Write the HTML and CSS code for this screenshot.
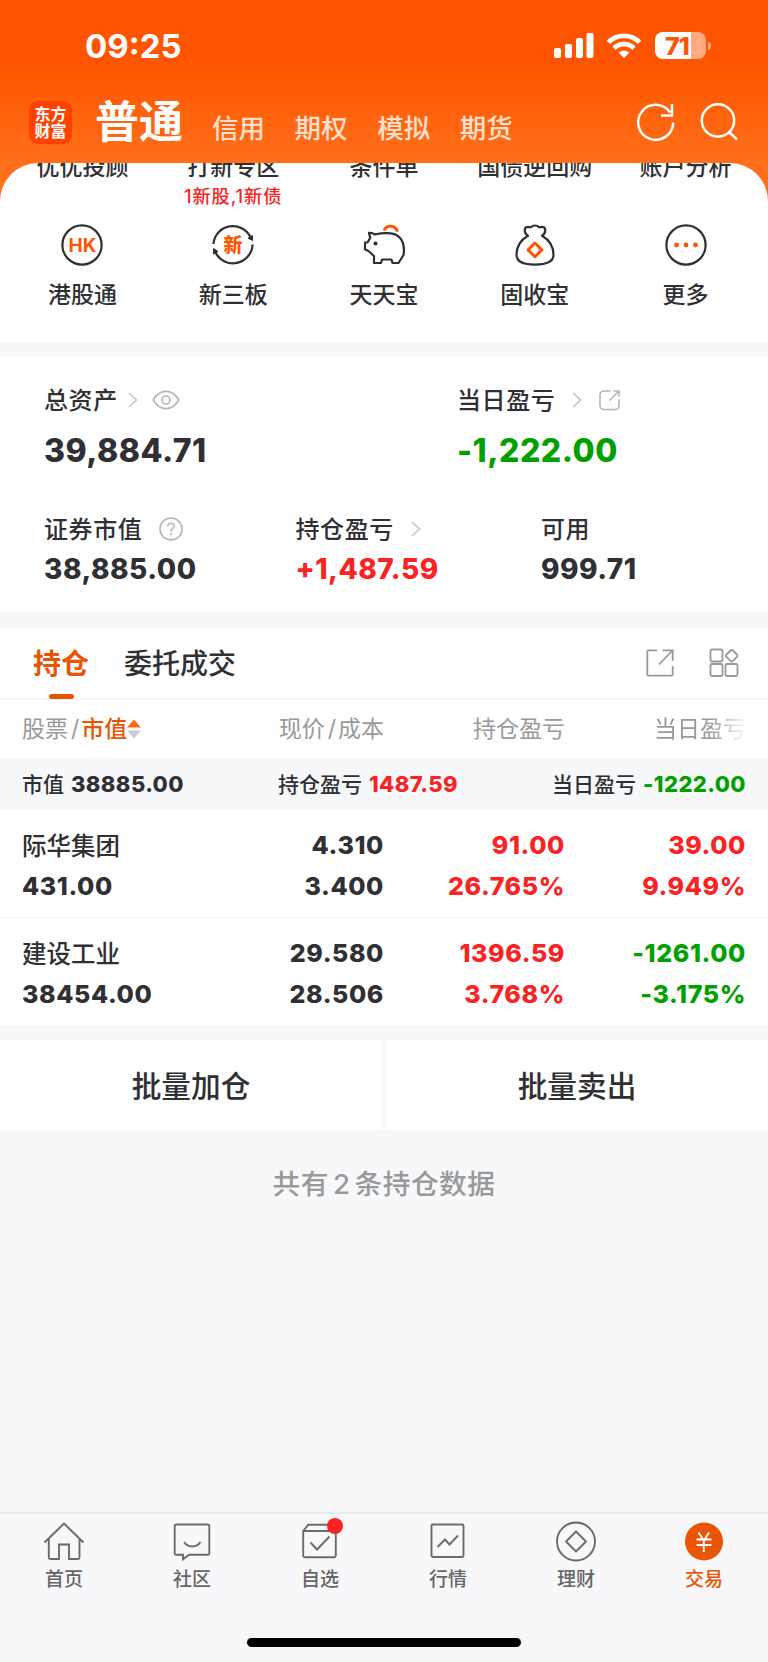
FILE: index.html
```html
<!DOCTYPE html>
<html lang="zh-CN">
<head>
    <meta charset="UTF-8">
    <meta name="viewport" content="width=device-width, initial-scale=1.0">
    <title>交易</title>
    <link rel="stylesheet" href="styles.css">
</head>
<body>
    <header class="top">
        <div class="status-bar">
            <span class="time">09:25</span>
            <svg class="signal" width="40" height="26" viewBox="0 0 40 26" fill="#fff">
                <rect x="0" y="15" width="7" height="10" rx="2"/>
                <rect x="11" y="11" width="7" height="14" rx="2"/>
                <rect x="22" y="5" width="7" height="20" rx="2"/>
                <rect x="32.500" y="0" width="7" height="25" rx="2"/>
            </svg>
            <svg class="wifi" width="36" height="26" viewBox="0 0 36 26" fill="none" stroke="#fff" stroke-width="4.800">
                <path d="M2.400 9.400a22 22 0 0 1 31.200 0"/>
                <path d="M8 15.200a14.200 14.200 0 0 1 20 0"/>
                <path d="M18 25l-5.300-5.300a7.500 7.500 0 0 1 10.600 0z" fill="#fff" stroke="none"/>
            </svg>
            <div class="battery"><span class="battery-level">71</span></div>
            <span class="battery-tip"></span>
        </div>
        <div class="title-bar">
            <div class="brand"><span>东方</span><span>财富</span></div>
            <h1>普通</h1>
            <nav class="account-types">
                <a>信用</a>
                <a>期权</a>
                <a>模拟</a>
                <a>期货</a>
            </nav>
            <svg class="refresh" width="38" height="38" viewBox="0 0 38 38" fill="none" stroke="#fff" stroke-width="2.500">
                <path d="M36.200 19.500A17.500 17.500 0 1 1 33.200 9.500"/>
                <path d="M35 1v11.500H24"/>
            </svg>
            <svg class="search" width="38" height="38" viewBox="0 0 38 38" fill="none" stroke="#fff" stroke-width="2.500">
                <circle cx="18" cy="17.500" r="16.200"/>
                <path d="M29 29l8 7.500"/>
            </svg>
        </div>
    </header>

    <section class="shortcuts">
        <div class="shortcut-row clipped">
            <span>优优投顾</span>
            <span>打新专区<em>1新股,1新债</em></span>
            <span>条件单</span>
            <span>国债逆回购</span>
            <span>账户分析</span>
        </div>
        <div class="shortcut-row">
            <a class="shortcut">
                <svg width="42" height="42" viewBox="0 0 42 42" fill="none" stroke="#2f3033" stroke-width="2.200">
                    <circle cx="21" cy="21" r="19.600"/>
                    <text x="21.500" y="28" class="hk">HK</text>
                </svg>
                港股通
            </a>
            <a class="shortcut">
                <svg width="42" height="42" viewBox="0 0 42 42" fill="none" stroke="#2f3033" stroke-width="2.200">
                    <path d="M1.400 20A19.600 19.600 0 0 1 38.500 13"/>
                    <path d="M40.600 20.500A19.600 19.600 0 0 1 3.500 28.500"/>
                    <path d="M40.500 11.500v5l-4.500-2.300z M1.500 30v-5.500l4.500 3z" fill="#2f3033" stroke-width="1"/>
                    <text x="21" y="28" class="xin">新</text>
                </svg>
                新三板
            </a>
            <a class="shortcut">
                <svg width="42" height="42" viewBox="0 0 42 42" fill="none" stroke="#2f3033" stroke-width="2.200" stroke-linejoin="round">
                    <path d="M12 10.500C10 9 8 8.600 6 8.900l1.200 5L4.500 18.500H2v7l3.500 1.500 5.500 5v7h7l1-3.500h9.500L29.500 39h6l5-8C42.500 19 38 9.500 25 9.200 20 9 16 9.500 12 10.500z"/>
                    <circle cx="12.500" cy="19.500" r="2" fill="#2f3033" stroke="none"/>
                    <path d="M21 6.500c2.500-6 11.500-6 13.500 1.200" stroke="#ff5500" stroke-width="3"/>
                </svg>
                天天宝
            </a>
            <a class="shortcut">
                <svg width="42" height="42" viewBox="0 0 42 42" fill="none" stroke="#2f3033" stroke-width="2.200" stroke-linejoin="round">
                    <path d="M14 11.800c-4-2.300-4.500-8.500-.500-8.900 1.500-.1 2.500.6 3.500.3 2-2.300 6-2.300 8 0 1 .3 2-.4 3.500-.3 4 .4 3.500 6.600-.5 8.900 7 4 11.500 11 11.500 19 0 7-6 9.800-18.500 9.800S2.500 37.800 2.500 30.800c0-8 4.500-15 11.500-19z"/>
                    <path d="M21 19l6.900 6.900L21 32.800l-6.900-6.900z" stroke="#ff5500" stroke-width="3"/>
                </svg>
                固收宝
            </a>
            <a class="shortcut">
                <svg width="42" height="42" viewBox="0 0 42 42" fill="none" stroke="#2f3033" stroke-width="2.200">
                    <circle cx="21" cy="21" r="19.600"/>
                    <g fill="#ff5500" stroke="none"><circle cx="11.500" cy="21" r="2.400"/><circle cx="21" cy="21" r="2.400"/><circle cx="30.500" cy="21" r="2.400"/></g>
                </svg>
                更多
            </a>
        </div>
    </section>

    <section class="assets">
        <div class="asset-row">
            <div class="asset total">
                <div class="label"><span>总资产</span>
                    <svg class="arrow" width="10" height="16" viewBox="0 0 10 16"><path d="M1 1l7.500 7L1 15"/></svg>
                    <svg class="eye" width="28" height="20" viewBox="0 0 28 20"><path d="M1.200 10C8-1.500 20-1.500 26.800 10 20 21.500 8 21.500 1.200 10z"/><circle cx="14" cy="10" r="4"/></svg>
                </div>
                <strong class="num-lg">39,884.71</strong>
            </div>
            <div class="asset">
                <div class="label"><span>当日盈亏</span>
                    <svg class="arrow wide" width="10" height="16" viewBox="0 0 10 16"><path d="M1 1l7.500 7L1 15"/></svg>
                    <svg class="share" width="22" height="22" viewBox="0 0 22 22"><path d="M11.500 2H5a4 4 0 0 0-4 4v10.500a4 4 0 0 0 4 4h11a4 4 0 0 0 4-4v-6M14.500 2H20v5.500M19.500 2.500l-9 9"/></svg>
                </div>
                <strong class="num-lg down">-1,222.00</strong>
            </div>
        </div>
        <div class="asset-row second">
            <div class="asset market">
                <div class="label"><span>证券市值</span>
                    <svg class="help" width="24" height="24" viewBox="0 0 24 24"><circle cx="12" cy="12" r="11"/><path d="M8.800 9.300c0-4 6.400-4 6.400-.3 0 2.500-3.200 2.600-3.200 5.400M12 16v2.200"/></svg>
                </div>
                <strong class="num-md">38,885.00</strong>
            </div>
            <div class="asset profit">
                <div class="label"><span>持仓盈亏</span>
                    <svg class="arrow wide" width="10" height="16" viewBox="0 0 10 16"><path d="M1 1l7.500 7L1 15"/></svg>
                </div>
                <strong class="num-md up">+1,487.59</strong>
            </div>
            <div class="asset">
                <div class="label"><span>可用</span></div>
                <strong class="num-md">999.71</strong>
            </div>
        </div>
    </section>

    <section class="positions">
        <div class="tabs">
            <a class="tab active">持仓</a>
            <a class="tab">委托成交</a>
            <svg class="export" width="28" height="28" viewBox="0 0 28 28" fill="none" stroke="#999" stroke-width="1.800"><path d="M11 1.300H2.500a1.200 1.200 0 0 0-1.200 1.200v23a1.200 1.200 0 0 0 1.200 1.200h23a1.200 1.200 0 0 0 1.200-1.200V17M16.500 1.300h10.200v10.500M26 2L13 15.500"/></svg>
            <svg class="grid-icon" width="30" height="30" viewBox="0 0 30 30" fill="none" stroke="#999" stroke-width="1.800">
                <rect x="1.500" y="1.500" width="12" height="12" rx="1.500"/>
                <rect x="1.500" y="16" width="12" height="12" rx="1.500"/>
                <rect x="16.500" y="16" width="12" height="12" rx="1.500"/>
                <path d="M21.500 2.500l-4 4q-1.200 1.200 0 2.400l4 4q1.200 1.200 2.400 0l4-4q1.200-1.200 0-2.400l-4-4q-1.200-1.200-2.400 0z"/>
            </svg>
        </div>
        <div class="row head">
            <span class="c1">股票<i>/</i><b>市值</b><svg width="14" height="20" viewBox="0 0 14 20"><path d="M0 8.500L7 .5l7 8z" fill="#ff6a1a"/><path d="M0 11.500l7 8 7-8z" fill="#ccc"/></svg></span>
            <span class="c2">现价<i>/</i>成本</span>
            <span class="c3">持仓盈亏</span>
            <span class="c4 fade">当日盈亏</span>
        </div>
        <div class="summary">
            <span>市值<strong>38885.00</strong></span>
            <span>持仓盈亏<strong class="up">1487.59</strong></span>
            <span>当日盈亏<strong class="down">-1222.00</strong></span>
        </div>
        <div class="row stock">
            <div class="c1"><span class="name">际华集团</span><strong>431.00</strong></div>
            <div class="c2"><strong>4.310</strong><strong>3.400</strong></div>
            <div class="c3 up"><strong>91.00</strong><strong>26.765%</strong></div>
            <div class="c4 up"><strong>39.00</strong><strong>9.949%</strong></div>
        </div>
        <div class="row stock">
            <div class="c1"><span class="name">建设工业</span><strong>38454.00</strong></div>
            <div class="c2"><strong>29.580</strong><strong>28.506</strong></div>
            <div class="c3 up"><strong>1396.59</strong><strong>3.768%</strong></div>
            <div class="c4 down"><strong>-1261.00</strong><strong>-3.175%</strong></div>
        </div>
    </section>

    <div class="actions">
        <button>批量加仓</button>
        <button>批量卖出</button>
    </div>
    <p class="count">共有<span>2</span>条持仓数据</p>

    <footer class="tabbar">
        <nav>
            <a>
                <svg width="42" height="42" viewBox="0 0 42 42"><path d="M1.500 21.500L21 2.500l19.500 19M5.800 18v18.500a1.500 1.500 0 0 0 1.500 1.500H16V23.500h10V38h9a1.500 1.500 0 0 0 1.500-1.500V18"/></svg>
                首页
            </a>
            <a>
                <svg width="42" height="42" viewBox="0 0 42 42"><path d="M5.500 3.500h31a1.800 1.800 0 0 1 1.800 1.800V32a1.800 1.800 0 0 1-1.800 1.800H18l-6 4.500v-4.500H5.500A1.800 1.800 0 0 1 3.700 32V5.300a1.800 1.800 0 0 1 1.800-1.800zM13 21c4 6 12.500 6 16.500 0"/></svg>
                社区
            </a>
            <a>
                <svg width="42" height="42" viewBox="0 0 42 42"><path d="M4.200 10v24.500A1.800 1.800 0 0 0 6 36.300h29a1.800 1.800 0 0 0 1.800-1.800V10zM4.200 10l5-6.200h23l4.600 6.200M11.500 21.500l6.500 7 12.500-13"/></svg>
                <i class="dot"></i>
                自选
            </a>
            <a>
                <svg width="42" height="42" viewBox="0 0 42 42"><rect x="4.500" y="3.500" width="32" height="32.500" rx="1.500"/><path d="M10.500 26l7.500-7.500 4.500 5L31 14.500"/></svg>
                行情
            </a>
            <a>
                <svg width="42" height="42" viewBox="0 0 42 42"><circle cx="21" cy="20.500" r="19"/><path d="M21 10.500l10 10-10 10-10-10z" stroke-linejoin="round"/></svg>
                理财
            </a>
            <a class="current">
                <svg width="42" height="42" viewBox="0 0 42 42"><circle class="disc" cx="21" cy="20.500" r="19"/><path class="yuan" d="M15.500 11.500l5.300 8 5.300-8M20.800 19.500V31M13.500 18.500h15M13.500 24h15"/></svg>
                交易
            </a>
        </nav>
        <div class="home-indicator"></div>
    </footer>
</body>
</html>
```
FILE: styles.css
```css
* {
    margin: 0;
    padding: 0;
    box-sizing: border-box;
}

body {
    width: 768px;
    height: 1662px;
    display: flex;
    flex-direction: column;
    font-family: Inter, "Noto Sans CJK SC", sans-serif;
    font-weight: 500;
    color: #2f3033;
    background: #f7f8fa;
    overflow: hidden;
}

svg {
    display: block;
    flex: none;
}

.up { color: #fa2222; }
.down { color: #00a000; }

/* header */
.top {
    height: 203px;
    flex: none;
    background: linear-gradient(180deg, #ff5500 0, #ff5500 65px, #ff6f1a 163px);
    color: #fff;
}

.status-bar {
    height: 91px;
    padding-left: 85px;
    display: flex;
    align-items: center;
}

.time {
    width: 469px;
    font-size: 33px;
    font-weight: 700;
    line-height: 40px;
}

.wifi { margin-left: 12px; }

.battery {
    margin-left: 13px;
    width: 51px;
    height: 27px;
    border-radius: 8px;
    background: linear-gradient(90deg, #fff 36.500px, #ffaa80 36.500px);
}

.battery-level {
    display: block;
    padding-left: 10px;
    font-size: 25px;
    line-height: 28px;
    font-weight: 800;
    color: #ff5500;
    letter-spacing: -1px;
}

.battery-tip {
    width: 3px;
    height: 8px;
    margin-left: 2px;
    border-radius: 0 4px 4px 0;
    background: #ffaa80;
}

.title-bar {
    height: 62px;
    padding-left: 29px;
    display: flex;
    align-items: center;
}

.brand {
    width: 43px;
    height: 43px;
    border-radius: 9px;
    background: #ff4200;
    display: flex;
    flex-direction: column;
    align-items: center;
    justify-content: center;
    font-family: "Noto Sans CJK SC", sans-serif;
    font-size: 16px;
    line-height: 17.500px;
    font-weight: 700;
}

.title-bar h1 {
    margin-left: 23px;
    width: 117px;
    font-size: 44px;
    line-height: 60px;
    font-weight: 700;
}

.account-types {
    display: flex;
    gap: 29.600px;
    padding-top: 12px;
    width: 425px;
    font-size: 26.500px;
    line-height: 36px;
    color: #ffe0cf;
}

.search { margin-left: 25px; }

/* shortcut menu */
.shortcuts {
    height: 179px;
    margin-top: -40px;
    flex: none;
    background: #fff;
    border-radius: 38px 38px 0 0;
    overflow: hidden;
    padding: 0 7px;
}

.shortcut-row {
    display: flex;
    font-size: 23px;
    line-height: 32px;
}

.shortcut-row > * {
    width: 20%;
    text-align: center;
    white-space: nowrap;
}

.clipped {
    height: 61px;
    margin-top: -12px;
    margin-bottom: 12px;
}

.clipped em {
    display: block;
    font-style: normal;
    font-size: 18.300px;
    line-height: 26px;
    letter-spacing: .9px;
    color: #fa2222;
}

.shortcut {
    display: flex;
    flex-direction: column;
    align-items: center;
    gap: 13px;
}

.hk,
.xin {
    fill: #ff5500;
    stroke: none;
    font-size: 19px;
    font-weight: 700;
    text-anchor: middle;
}

.xin { font-weight: 900; }

/* assets */
.assets {
    height: 255px;
    margin-top: 15px;
    flex: none;
    background: #fff;
    padding: 25px 44px 0;
}

.asset-row {
    display: flex;
}

.second { margin-top: 29px; }
.total { width: 413px; }
.market { width: 251.500px; }
.profit { width: 245.500px; }

.label {
    display: flex;
    align-items: center;
    height: 36px;
    font-size: 24px;
    letter-spacing: .6px;
}

.label span { margin-top: -4px; }

.label svg {
    fill: none;
    stroke: #b5b5b5;
    stroke-width: 1.600;
}

.label .arrow { margin-left: 10px; stroke: #c4c4c4; }
.label .arrow.wide { margin-left: 17px; }
.label .eye { margin-left: 14px; }
.label .share { margin-left: 17px; }
.label .help { margin-left: 17px; }

.asset strong {
    display: block;
    font-weight: 800;
    letter-spacing: .5px;
}

.num-lg {
    font-size: 32px;
    line-height: 66px;
    margin-bottom: -2px;
}

.num-md {
    font-size: 28px;
    line-height: 45px;
}

/* positions */
.positions {
    margin-top: 16px;
    flex: none;
    background: #fff;
}

.tabs {
    height: 72px;
    padding: 0 29px 0 33px;
    display: flex;
    align-items: center;
    border-bottom: 2px solid #f5f6f8;
}

.tab {
    height: 70px;
    line-height: 72px;
    font-size: 28px;
    margin-right: 35px;
}

.tab.active {
    position: relative;
    font-weight: 700;
    color: #ea5504;
}

.tab.active::after {
    content: "";
    position: absolute;
    left: 16px;
    bottom: -1px;
    width: 25px;
    height: 5px;
    border-radius: 3px;
    background: #ea5504;
}

.export { margin-left: auto; margin-right: 35px; }

.row { display: flex; }
.c1 { width: 203px; padding-left: 22px; }
.c2 { width: 181px; text-align: right; }
.c3 { width: 181px; text-align: right; }
.c4 { width: 181px; text-align: right; }

.head {
    height: 57px;
    line-height: 58px;
    font-size: 23px;
    font-weight: 400;
    color: #999;
}

.head .c1 {
    display: flex;
    align-items: center;
}

.head b { color: #ea5504; font-weight: 500; }
.head i { font-style: normal; padding: 0 2px 0 3px; }

.fade {
    -webkit-mask-image: linear-gradient(90deg, #000 145px, transparent 183px);
    mask-image: linear-gradient(90deg, #000 145px, transparent 183px);
}

.summary {
    height: 54px;
    padding: 0 22px;
    display: flex;
    justify-content: space-between;
    line-height: 54px;
    font-size: 21px;
    background: #f7f8fa;
}

.summary strong {
    margin-left: 7px;
    font-size: 22px;
    font-weight: 800;
    letter-spacing: .4px;
}

.stock {
    height: 108px;
    padding-top: 14px;
    border-bottom: 2px solid #f5f6f8;
}

.stock:last-child {
    height: 106px;
    border-bottom: 0;
}

.stock > div {
    display: flex;
    flex-direction: column;
}

.stock strong,
.name {
    height: 41px;
    line-height: 41px;
    font-size: 25px;
    font-weight: 800;
    letter-spacing: .6px;
}

.name {
    line-height: 42px;
    font-size: 24.500px;
    font-weight: 500;
    letter-spacing: 0;
}

/* footer area */
.actions {
    display: flex;
    gap: 4px;
    margin-top: 15px;
}

.actions button {
    flex: 1;
    height: 90px;
    padding-bottom: 2px;
    border: 0;
    background: #fff;
    font: inherit;
    font-size: 29.700px;
    color: inherit;
}

.count {
    margin-top: 33px;
    text-align: center;
    font-size: 27.700px;
    line-height: 42px;
    letter-spacing: .5px;
    color: #999;
}

.count span { padding: 0 4px; }

.tabbar {
    height: 150px;
    margin-top: auto;
    flex: none;
    border-top: 2px solid #eaebed;
    background: #f8f8fa;
}

.tabbar nav {
    display: flex;
    padding-top: 7px;
}

.tabbar a {
    position: relative;
    flex: 1;
    display: flex;
    flex-direction: column;
    align-items: center;
    gap: 3px;
    font-size: 19px;
    line-height: 28px;
    color: #666;
}

.tabbar svg {
    fill: none;
    stroke: #6b6b6b;
    stroke-width: 1.900;
}

.dot {
    position: absolute;
    left: 71px;
    top: -3px;
    width: 16px;
    height: 16px;
    border-radius: 50%;
    background: #fa2222;
}

.tabbar .current { color: #ea5504; }
.tabbar .disc { fill: #ea5504; stroke: none; }
.tabbar .yuan { stroke: #fff; }

.home-indicator {
    width: 274px;
    height: 9px;
    margin: 44px auto 0;
    border-radius: 5px;
    background: #000;
}
```
